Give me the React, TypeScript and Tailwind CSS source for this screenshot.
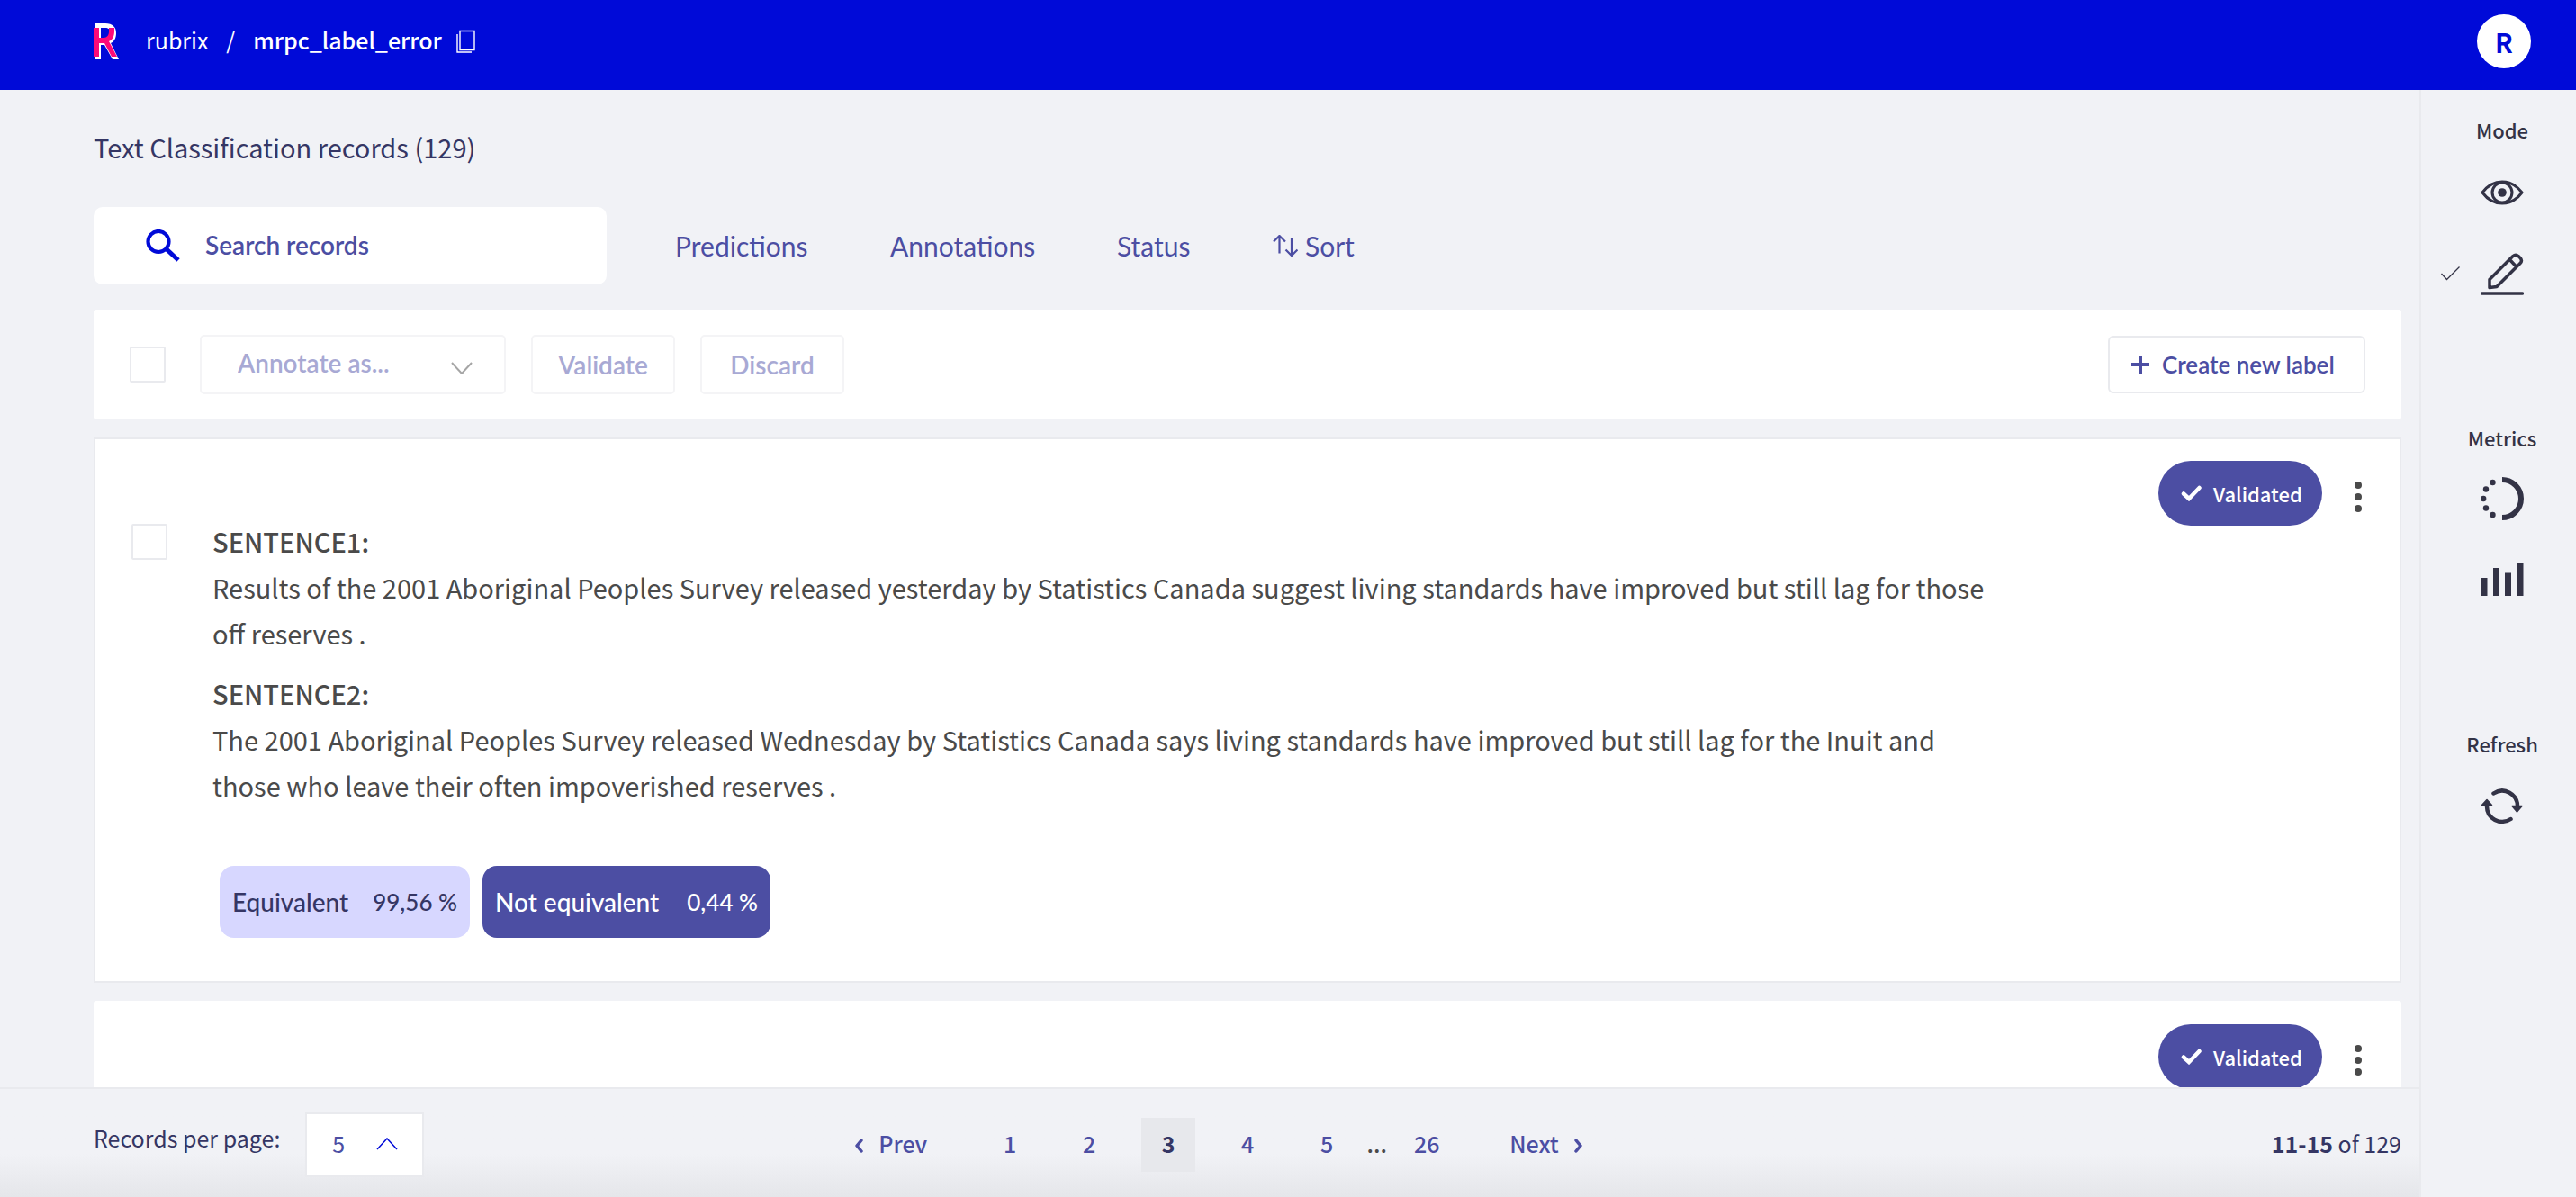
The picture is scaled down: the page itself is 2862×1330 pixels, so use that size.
import React from "react";

const body = "font-['Noto_Sans_CJK_SC','Noto_Sans',sans-serif]";
const display = "font-['Lato','Liberation_Sans',sans-serif]";

function Logo() {
  return (
    <svg className="h-10 w-7" viewBox="0 0 28 40" fill="none" aria-label="Rubrix logo">
      <path fill="#fff" fillRule="evenodd" d="M2 0h11c8 0 12 4 12 11 0 5-2 9-6 11l9 18h-7l-9-16H8v16H2V0Zm6 5v14h5c4 0 6-2 6-7s-2-7-6-7H8Z" />
      <path fill="#ff0a78" d="M0 5h6v11h5c4 0 6-3 6-7V5h6v4c0 5-2 9-6 11l9 17h-6L12 22H6v15H0V5Z" />
    </svg>
  );
}

function Chevron({ className, up = false }: { className: string; up?: boolean }) {
  return (
    <svg className={className} viewBox="0 0 24 14" fill="none" stroke="currentColor" strokeWidth={up ? 1.5 : 2} aria-hidden="true">
      <path d={up ? "M1 13 12 1l11 12" : "M1 1l11 12L23 1"} />
    </svg>
  );
}

function ArrowHead({ left = false }: { left?: boolean }) {
  return (
    <svg className="mt-1 h-4 w-3" viewBox="0 0 12 16" fill="none" stroke="currentColor" strokeWidth="3.5" strokeLinecap="round" strokeLinejoin="round" aria-hidden="true">
      <path d={left ? "M9 2 4 8l5 6" : "M3 2l5 6-5 6"} />
    </svg>
  );
}

function Header() {
  return (
    <header className="flex h-[100px] shrink-0 items-start justify-between bg-[#000ad8] pr-[50px] pl-[104px] text-white">
      <nav className="flex h-[92px] items-center">
        <a href="#home"><Logo /></a>
        <a href="#rubrix" className="ml-[30px] pb-1 text-[25px] leading-9">rubrix</a>
        <span className="mx-5 pb-1 text-[25px] leading-9">/</span>
        <a href="#dataset" className="pb-1 text-[25px] leading-9 font-medium">mrpc_label_error</a>
        <button className="ml-4" aria-label="Copy name">
          <svg className="h-[26px] w-[22px]" viewBox="0 0 22 26" fill="none" stroke="#fff" strokeWidth="1.4" aria-hidden="true">
            <path d="M4 1.500h16v21H4zM1 5v20h16" />
          </svg>
        </button>
      </nav>
      <button className="mt-4 grid size-[60px] place-items-center rounded-full bg-white text-[29px] leading-8 font-bold text-[#000ad8]">R</button>
    </header>
  );
}

function Filters() {
  return (
    <div className="mt-[47px] flex items-center">
      <label className="flex h-[86px] w-[570px] items-center rounded-[10px] bg-white pl-[58px]">
        <svg className="h-9 w-[38px] text-[#000ad8]" viewBox="0 0 38 36" fill="none" stroke="currentColor" aria-hidden="true">
          <circle cx="14" cy="13.500" r="11.500" strokeWidth="4.200" />
          <path d="M22.500 21.500 36 34" strokeWidth="5" />
        </svg>
        <input type="search" aria-label="Search records" placeholder="Search records" className={`${display} ml-7 w-[400px] pb-0.5 text-[28px] leading-9 font-semibold text-[#4c4ea3] outline-none placeholder:text-[#4c4ea3]`} />
      </label>
      <div className={`${display} flex items-center text-[30px] leading-10 text-[#4c4ea3]`}>
        <button className="ml-[76px] w-[148px] text-left">Predictions</button>
        <button className="ml-[91px] w-[162px] text-left">Annotations</button>
        <button className="ml-[90px] w-[85px] text-left">Status</button>
        <button className="ml-[88px] flex items-center gap-2">
          <svg className="h-6 w-7" viewBox="0 0 28 24" fill="none" stroke="currentColor" strokeWidth="2.200" aria-hidden="true">
            <path d="M7.500 20.500V1.500M1 7.500l6.500-6.500L14 7.500M21 4v19M14.500 16.500 21 23l6.500-6.500" />
          </svg>
          Sort
        </button>
      </div>
    </div>
  );
}

function Toolbar() {
  return (
    <div className={`${display} mt-7 flex h-[122px] shrink-0 items-center rounded-[3px] bg-white px-10 text-[28px] leading-8 font-semibold`}>
      <input type="checkbox" aria-label="Select all records" className="size-10 appearance-none rounded-[2px] border-2 border-[#e9eaee]" />
      <div className="relative ml-[38px] w-[340px] text-[#a8a9d4]">
        <select disabled aria-label="Annotate as" className="h-[66px] w-full appearance-none rounded-[5px] border-2 border-[#f4f4f6] pb-1 pl-10 opacity-100">
          <option>Annotate as...</option>
        </select>
        <Chevron className="pointer-events-none absolute top-[30px] right-[37px] h-[14px] w-6 text-[#a5a5a5]" />
      </div>
      <button disabled className="ml-7 h-[66px] w-[160px] rounded-[5px] border-2 border-[#f4f4f6] text-[#a8a9d4]">Validate</button>
      <button disabled className="ml-7 h-[66px] w-[160px] rounded-[5px] border-2 border-[#f4f4f6] text-[#a8a9d4]">Discard</button>
      <button className="ml-auto flex h-16 w-[286px] items-center rounded-[6px] border-2 border-[#e9eaee] pl-6 text-[26px] text-[#4c4ea3]">
        <svg className="mr-3.5 size-5" viewBox="0 0 20 20" stroke="currentColor" strokeWidth="4" aria-hidden="true"><path d="M10 0v20M0 10h20" /></svg>
        Create new label
      </button>
    </div>
  );
}

function CardStatus() {
  return (
    <div className="flex h-[72px] items-center justify-end pr-[34px]">
      <span className="flex h-[72px] w-[182px] items-center rounded-full bg-[#4c4ea3] pl-[25px] text-[22px] leading-8 font-medium text-white">
        <svg className="mr-3 h-[18px] w-6" viewBox="0 0 24 18" fill="none" stroke="currentColor" strokeWidth="4.500" strokeLinecap="round" aria-hidden="true"><path d="m3 9.500 6 5.500L20.500 3" /></svg>
        Validated
      </span>
      <button className="ml-7 grid w-6 place-items-center pt-2" aria-label="Record options">
        <svg className="h-9 w-2" viewBox="0 0 8 36" fill="#4a4a4a" aria-hidden="true"><circle cx="4" cy="5" r="4" /><circle cx="4" cy="18" r="4" /><circle cx="4" cy="31" r="4" /></svg>
      </button>
    </div>
  );
}

const sentences = [
  ["SENTENCE1:", "Results of the 2001 Aboriginal Peoples Survey released yesterday by Statistics Canada suggest living standards have improved but still lag for those off reserves ."],
  ["SENTENCE2:", "The 2001 Aboriginal Peoples Survey released Wednesday by Statistics Canada says living standards have improved but still lag for the Inuit and those who leave their often impoverished reserves ."],
];

function Records() {
  return (
    <>
      <article className="mt-5 shrink-0 border-2 border-[#e9eaee] bg-white pt-6 pb-12">
        <CardStatus />
        <div className="-mt-0.5 flex pl-10">
          <input type="checkbox" aria-label="Select record" className="size-10 shrink-0 appearance-none rounded-[2px] border-2 border-[#e9eaee]" />
          <div className="-mt-1.5 ml-[50px] w-[1975px] text-[29px] leading-[51px] text-[#4a4a4a]">
            {sentences.map(([k, t]) => (
              <section key={k} className="mb-4">
                <h2 className="font-medium">{k}</h2>
                <p>{t}</p>
              </section>
            ))}
          </div>
        </div>
        <div className={`${display} mt-12 flex gap-3.5 pl-[138px] text-[28px] leading-9 font-medium`}>
          <button className="flex h-20 w-[278px] items-center justify-between rounded-2xl bg-[#d7d7ff] px-3.5 text-[#353664]">
            <span>Equivalent</span><span className="text-[26px]">99,56 %</span>
          </button>
          <button className="flex h-20 w-[320px] items-center justify-between rounded-2xl bg-[#4c4ea3] px-3.5 text-white">
            <span>Not equivalent</span><span className="text-[26px]">0,44 %</span>
          </button>
        </div>
      </article>
      <article className="mt-5 shrink-0 rounded-[3px] border-2 border-white bg-white pt-6 pb-12"><CardStatus /></article>
    </>
  );
}

function Footer() {
  const num = "h-[60px] w-[60px] pb-0.5 font-medium";
  return (
    <footer className="grid h-[122px] shrink-0 grid-cols-[1fr_auto_1fr] items-start border-t-2 border-[#e9eaee] bg-linear-to-b from-[#f1f2f6] from-60% to-[#e5e6ea] pt-[26px] pr-5 pl-[104px] text-[25px] text-[#353664]">
      <div className="flex items-start">
        <label htmlFor="per-page" className="pt-2.5 leading-9">Records per page:</label>
        <div className="relative ml-7 w-[132px] text-[#4c4ea3]">
          <select id="per-page" className="h-[72px] w-full appearance-none border-2 border-[#e9eaee] bg-white pb-0.5 pl-7">
            <option>5</option>
          </select>
          <Chevron up className="pointer-events-none absolute top-7 right-[29px] h-[14px] w-6 text-[#000ad8]" />
        </div>
      </div>
      <nav className="mt-1.5 mr-16 flex h-[60px] items-center text-[#4c4ea3]">
        <button className="flex items-center gap-4 pb-0.5 font-medium"><ArrowHead left />Prev</button>
        <div className="mx-[62px] flex items-center">
          <div className="flex gap-7">
            <button className={num}>1</button>
            <button className={num}>2</button>
            <button className="h-[60px] w-[60px] bg-[#e7e8ec] pb-0.5 font-bold text-[#353664]">3</button>
            <button className={num}>4</button>
            <button className={num}>5</button>
          </div>
          <span className="w-[51px] pb-0.5 text-center font-medium text-[#4a4a4a]">...</span>
          <button className={num}>26</button>
        </div>
        <button className="flex items-center gap-4 pb-0.5 font-medium">Next<ArrowHead /></button>
      </nav>
      <p className="mt-1 text-right leading-[60px]"><strong className="font-bold">11-15</strong> of 129</p>
    </footer>
  );
}

function Sidebar() {
  const heading = "text-center text-[22px] leading-8 font-medium";
  return (
    <aside className="flex w-[174px] shrink-0 flex-col items-center border-l-2 border-[#e9eaee] pt-7 pl-2 text-[#333346]">
      <h2 className={heading}>Mode</h2>
      <button className="mt-10" aria-label="Explore mode">
        <svg className="h-7 w-12" viewBox="0 0 48 28" fill="none" stroke="currentColor" strokeWidth="3" aria-hidden="true">
          <path d="M2 14C14-2 34-2 46 14 34 30 14 30 2 14Z" strokeLinejoin="round" />
          <circle cx="24" cy="14" r="11" /><circle cx="24" cy="14" r="4.800" fill="currentColor" stroke="none" />
        </svg>
      </button>
      <button className="relative mt-[53px]" aria-label="Annotate mode">
        <svg className="absolute top-[15px] -left-11 h-4 w-[21px]" viewBox="0 0 21 16" fill="none" stroke="currentColor" strokeWidth="1.300" aria-hidden="true"><path d="m.5 8 6 6.500L20.500.500" /></svg>
        <svg className="h-[47px] w-12" viewBox="0 0 48 47" fill="none" stroke="currentColor" strokeWidth="3.500" strokeLinejoin="round" aria-hidden="true">
          <path d="M10 38.500v-9L36 3.500q3-2.500 6 0l2 2q3 3 0 6L18 37.500ZM32.500 7.500l7.500 8" />
          <path d="M1.500 45h45" strokeWidth="3.500" strokeLinecap="round" />
        </svg>
      </button>
      <h2 className={`${heading} mt-[142px]`}>Metrics</h2>
      <button className="mt-7" aria-label="Progress">
        <svg className="size-12" viewBox="0 0 48 48" fill="currentColor" aria-hidden="true">
          <path d="M24 3a21 21 0 0 1 0 42" fill="none" stroke="currentColor" strokeWidth="6" />
          <circle cx="13.500" cy="6" r="3.200" /><circle cx="6" cy="13.500" r="3.200" /><circle cx="3.200" cy="24" r="3.200" /><circle cx="6" cy="34.500" r="3.200" /><circle cx="13.500" cy="42" r="3.200" />
        </svg>
      </button>
      <button className="mt-12" aria-label="Stats">
        <svg className="h-9 w-12" viewBox="0 0 48 36" fill="currentColor" aria-hidden="true">
          <path d="M.5 16h7v20h-7zM14 5h7v31h-7zM27 10.500h7V36h-7zM40.500 0h7v36h-7z" />
        </svg>
      </button>
      <h2 className={`${heading} mt-[148px]`}>Refresh</h2>
      <button className="mt-[34px]" aria-label="Refresh">
        <svg className="h-10 w-12" viewBox="0 0 48 40" fill="none" stroke="currentColor" strokeWidth="4.500" strokeLinecap="round" aria-hidden="true">
          <path d="M14.500 5.500A17 17 0 0 1 41 20M33.500 34A17 17 0 0 1 7 20" />
          <path d="M35 19.500h11L40.500 26ZM1.500 18.500h11L7 12.500Z" fill="currentColor" strokeWidth="1.500" strokeLinejoin="round" />
        </svg>
      </button>
    </aside>
  );
}

export default function App() {
  return (
    <div className={`${body} flex h-screen flex-col overflow-hidden bg-[#f1f2f6]`}>
      <Header />
      <div className="flex min-h-0 flex-1">
        <div className="flex min-w-0 flex-1 flex-col">
          <main className="flex min-h-0 flex-1 flex-col overflow-hidden pr-5 pl-[104px]">
            <h1 className="mt-[43px] text-[29px] leading-10 text-[#353664]">Text Classification records (129)</h1>
            <Filters />
            <Toolbar />
            <Records />
          </main>
          <Footer />
        </div>
        <Sidebar />
      </div>
    </div>
  );
}
